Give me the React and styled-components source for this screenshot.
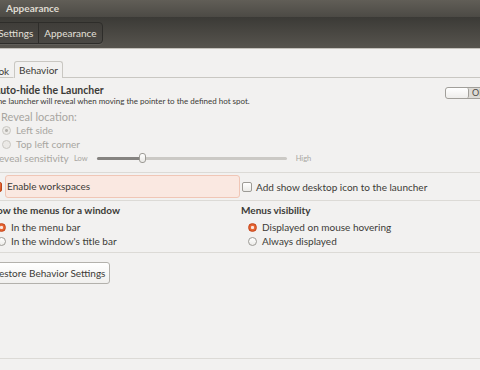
import React from 'react'
import styled, {createGlobalStyle} from 'styled-components'

const GlobalStyle = createGlobalStyle`
    html, body {
        margin: 0;
        padding: 0;
        background: #f2f1f0;
        overflow: hidden;
    }
    * { box-sizing: border-box; }
`

const FONT = `"Lato", "Liberation Sans", sans-serif`

export default function App() {
    return (
        <Window>
            <GlobalStyle />
            <TitleBar>Appearance</TitleBar>
            <Toolbar>
                <Crumbs>
                    <Crumb>System Settings</Crumb>
                    <Crumb>Appearance</Crumb>
                </Crumbs>
            </Toolbar>

            <Content>
                <Tabs>
                    <Tab>Look</Tab>
                    <Tab active>Behavior</Tab>
                    <TabFill />
                </Tabs>

                <Page>
                    <HeadRow>
                        <div>
                            <Title>Auto-hide the Launcher</Title>
                            <Hint>The launcher will reveal when moving the pointer to the defined hot spot.</Hint>
                        </div>
                        <Switch>
                            <SwitchKnob />
                            <SwitchLabel>OFF</SwitchLabel>
                        </Switch>
                    </HeadRow>

                    <SubLabel>Reveal location:</SubLabel>
                    <OptionRow indent={16} disabled>
                        <Radio checked disabled />
                        Left side
                    </OptionRow>
                    <OptionRow indent={16} disabled>
                        <Radio disabled />
                        Top left corner
                    </OptionRow>
                    <SliderRow>
                        <SliderName>Reveal sensitivity</SliderName>
                        <SmallTag>Low</SmallTag>
                        <Track>
                            <TrackFill style={{width: '24%'}} />
                            <Knob style={{left: '24%'}} />
                        </Track>
                        <SmallTag>High</SmallTag>
                    </SliderRow>

                    <Divider top={7} />

                    <CheckGrid>
                        <CheckCell>
                            <Checkbox checked />
                            <Hover>Enable workspaces</Hover>
                        </CheckCell>
                        <CheckCell>
                            <Checkbox />
                            <CheckText>Add show desktop icon to the launcher</CheckText>
                        </CheckCell>
                    </CheckGrid>

                    <Divider top={1} />

                    <Columns>
                        <div>
                            <Heading>Show the menus for a window</Heading>
                            <OptionRow indent={11}>
                                <Radio checked />
                                In the menu bar
                            </OptionRow>
                            <OptionRow indent={11}>
                                <Radio />
                                In the window's title bar
                            </OptionRow>
                        </div>
                        <div>
                            <Heading>Menus visibility</Heading>
                            <OptionRow indent={7}>
                                <Radio checked />
                                Displayed on mouse hovering
                            </OptionRow>
                            <OptionRow indent={7}>
                                <Radio />
                                Always displayed
                            </OptionRow>
                        </div>
                    </Columns>

                    <Divider top={4} />

                    <RestoreButton>Restore Behavior Settings</RestoreButton>

                    <Divider top={74} />
                </Page>
            </Content>
        </Window>
    )
}

const Window = styled.div`
    width: 480px;
    height: 370px;
    overflow: hidden;
    display: flex;
    flex-direction: column;
    font-family: ${FONT};
    background: #f2f1f0;
    color: #3c3b37;
`

const TitleBar = styled.div`
    height: 17px;
    padding-left: 6px;
    background: linear-gradient(#615e57, #4c4a45);
    color: #dfdbd2;
    font-weight: bold;
    font-size: 10px;
    line-height: 17px;
`

const Toolbar = styled.div`
    height: 32px;
    background: linear-gradient(#3b3a36, #57544e);
    border-bottom: 1px solid #c4c1bb;
    display: flex;
    align-items: center;
`

const Crumbs = styled.div`
    display: flex;
    margin-left: -42px;
    border: 1px solid #2e2d2a;
    border-radius: 4px;
    height: 22px;
    background: linear-gradient(#403e3a, #4a4844);
    box-shadow: 0 1px 0 rgba(255, 255, 255, 0.08);
`

const Crumb = styled.div`
    padding: 0 5px;
    line-height: 20px;
    font-size: 10px;
    color: #e3e0da;
    & + & {
        border-left: 1px solid #2e2d2a;
    }
`

const Content = styled.div`
    flex: 1;
    margin-left: -14px;
    padding-top: 12px;
`

const Tabs = styled.div`
    display: flex;
    height: 17px;
    align-items: flex-end;
`

const Tab = styled.div`
    height: ${p => (p.active ? '17px' : '16px')};
    padding: 0 4px;
    font-size: 10px;
    line-height: 16px;
    border: 1px solid ${p => (p.active ? '#c9c7c2' : 'transparent')};
    border-bottom: ${p => (p.active ? 'none' : '1px solid #c9c7c2')};
    border-radius: 3px 3px 0 0;
    background: #f2f1f0;
    &:first-child {
        padding-left: 1px;
        width: 28px;
    }
`

const TabFill = styled.div`
    flex: 1;
    border-bottom: 1px solid #c9c7c2;
`

const Page = styled.div`
    padding-top: 6px;
`

const HeadRow = styled.div`
    display: flex;
    justify-content: space-between;
    align-items: flex-start;
    padding-left: 7px;
    margin-right: -26px;
`

const Title = styled.div`
    font-weight: bold;
    font-size: 10.5px;
    line-height: 12px;
`

const Hint = styled.div`
    font-size: 8px;
    line-height: 10px;
`

const Switch = styled.div`
    display: flex;
    width: 61px;
    height: 12px;
    margin-top: 3px;
    border: 1px solid #a19f9a;
    border-radius: 3px;
    background: #dcdad5;
    overflow: hidden;
`

const SwitchKnob = styled.div`
    width: 23px;
    height: 100%;
    background: linear-gradient(#ffffff, #eeedeb);
    border-right: 1px solid #a19f9a;
    border-radius: 2px;
`

const SwitchLabel = styled.div`
    padding-left: 3px;
    font-size: 9px;
    line-height: 10px;
    color: #4c4b47;
`

const SubLabel = styled.div`
    margin-top: 5px;
    padding-left: 15px;
    font-size: 11px;
    line-height: 12px;
    color: #a8a6a1;
`

const OptionRow = styled.label`
    display: flex;
    align-items: center;
    gap: 5px;
    height: 14px;
    padding-left: ${p => p.indent}px;
    font-size: 10px;
    color: ${p => (p.disabled ? '#a8a6a1' : '#3c3b37')};
`

const Radio = styled.span`
    width: 9px;
    height: 9px;
    flex: none;
    border-radius: 50%;
    border: 1px solid ${p => (p.disabled ? '#c9c7c2' : p.checked ? '#c7471c' : '#9d9b96')};
    background: ${p =>
        p.disabled
            ? '#ebe9e6'
            : p.checked
            ? 'radial-gradient(circle, #fbe6dc 0 1.3px, #e86a3a 1.8px, #d9531f)'
            : 'linear-gradient(#ffffff, #ecebe8)'};
    ${p => p.disabled && p.checked && `
        background: radial-gradient(circle, #b5b3ae 0 1.2px, #ebe9e6 1.7px);
    `}
`

const SliderRow = styled.div`
    display: flex;
    align-items: center;
    height: 14px;
    padding-left: 7px;
    color: #a8a6a1;
`

const SliderName = styled.span`
    font-size: 10px;
    width: 81px;
`

const SmallTag = styled.span`
    font-size: 7.5px;
    color: #a8a6a1;
`

const Track = styled.div`
    position: relative;
    width: 190px;
    height: 3px;
    margin: 0 9px 0 9px;
    border-radius: 2px;
    background: #cbc9c5;
`

const TrackFill = styled.div`
    height: 100%;
    border-radius: 2px;
    background: #858380;
`

const Knob = styled.div`
    position: absolute;
    top: -4px;
    width: 7px;
    height: 10px;
    margin-left: -3px;
    border: 1px solid #9c9a95;
    border-radius: 3px;
    background: linear-gradient(#ffffff, #e9e8e5);
`

const Divider = styled.div`
    margin-top: ${p => p.top}px;
    height: 1px;
    background: #dcdad6;
`

const CheckGrid = styled.div`
    display: grid;
    grid-template-columns: 248px 1fr;
    column-gap: 2px;
    margin-top: 1px;
    height: 25px;
    align-items: center;
    padding-left: 6px;
`

const CheckCell = styled.div`
    display: flex;
    align-items: center;
    gap: 3px;
`

const Checkbox = styled.span`
    width: 10px;
    height: 10px;
    flex: none;
    border-radius: 2px;
    border: 1px solid ${p => (p.checked ? '#bd4519' : '#9d9b96')};
    background: ${p => (p.checked ? 'linear-gradient(#ea6c3c, #d9531f)' : 'linear-gradient(#ffffff, #ecebe8)')};
`

const Hover = styled.span`
    flex: 1;
    height: 23px;
    padding-left: 1px;
    border: 1px solid #f0c6b6;
    border-radius: 3px;
    background: #fae8e1;
    font-size: 10px;
    line-height: 21px;
`

const CheckText = styled.span`
    padding-left: 1px;
    font-size: 10px;
`

const Columns = styled.div`
    display: grid;
    grid-template-columns: 255px 1fr;
    padding-top: 3px;
`

const Heading = styled.div`
    font-weight: bold;
    font-size: 10px;
    line-height: 12px;
    margin-bottom: 4px;
`

const RestoreButton = styled.button`
    margin-top: 9px;
    margin-left: 2px;
    height: 22px;
    padding: 0 4px;
    border: 1px solid #b3b1ac;
    border-radius: 3px;
    background: linear-gradient(#ffffff, #f1f0ee);
    font-family: ${FONT};
    font-size: 10px;
    color: #3c3b37;
    display: block;
`
